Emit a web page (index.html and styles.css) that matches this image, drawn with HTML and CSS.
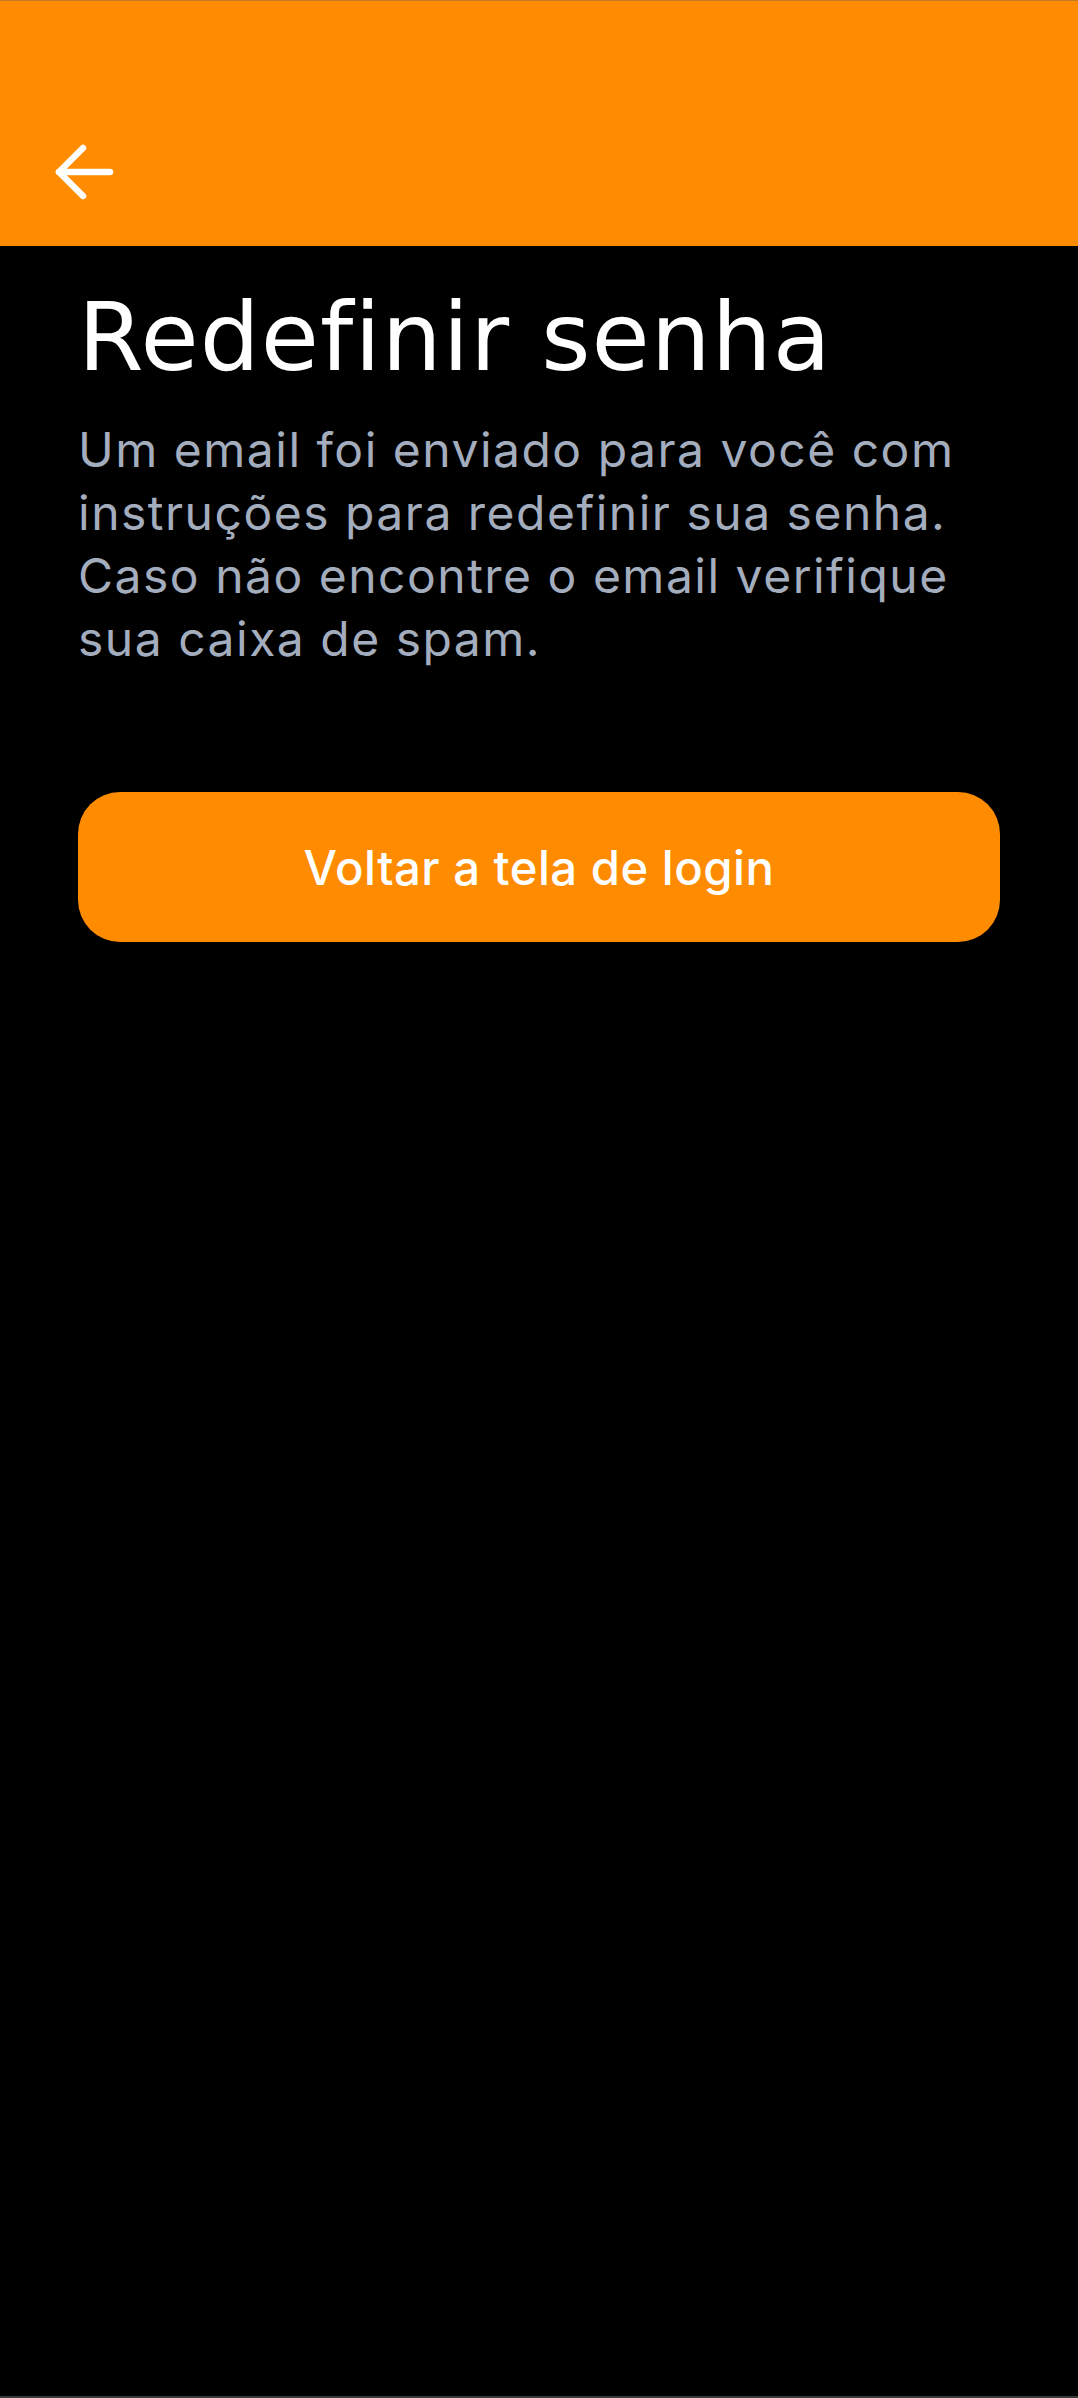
FILE: index.html
```html
<!DOCTYPE html>
<html lang="pt-BR">
<head>
<meta charset="utf-8">
<title>Redefinir senha</title>
<link rel="stylesheet" href="styles.css">
</head>
<body>
<div class="screen">
  <header class="topbar">
    <button class="back" aria-label="Voltar">
      <svg width="80" height="64" viewBox="0 0 80 64" fill="none" stroke="#ffffff" stroke-width="6.5" stroke-linecap="round" stroke-linejoin="round">
        <path d="M19 32 H70"/>
        <path d="M43 8 L19 32 L43 56"/>
      </svg>
    </button>
  </header>
  <main class="content">
    <h1 class="title">Redefinir senha</h1>
    <p class="desc">Um email foi enviado para você com instruções para redefinir sua senha. Caso não encontre o email verifique sua caixa de spam.</p>
    <button class="primary">Voltar a tela de login</button>
  </main>
</div>
</body>
</html>
```
FILE: styles.css
```css
html, body {
  margin: 0;
  padding: 0;
  background: #000000;
}
.screen {
  width: 1078px;
  height: 2398px;
  background: #000000;
  display: flex;
  flex-direction: column;
  box-sizing: border-box;
  border-bottom: 2px solid #3a3a3a;
}
.topbar {
  height: 246px;
  box-sizing: border-box;
  background: #ff8b00;
  border-top: 1px solid #c4782a;
  padding: 139px 0 0 40px;
  flex: none;
}
.back {
  display: block;
  padding: 0;
  margin: 0;
  border: 0;
  background: transparent;
  width: 80px;
  height: 64px;
}
.back svg {
  display: block;
}
.content {
  padding: 0 78px;
  display: flex;
  flex-direction: column;
}
.title {
  margin: 36px 0 0 0;
  font-family: "DejaVu Sans", sans-serif;
  font-weight: 400;
  font-size: 94.5px;
  line-height: 110px;
  color: #ffffff;
  letter-spacing: 1.1px;
}
.desc {
  margin: 26px 0 0 0;
  padding-right: 30px;
  font-family: "Inter", sans-serif;
  font-size: 48px;
  line-height: 63px;
  color: #a3adbe;
  font-weight: 400;
  letter-spacing: 1.5px;
}
.primary {
  margin-top: 122px;
  height: 150px;
  width: 100%;
  border: 0;
  border-radius: 42px;
  background: #ff8b00;
  color: #ffffff;
  font-family: "Inter", sans-serif;
  font-weight: 500;
  font-size: 47.25px;
  letter-spacing: 0.5px;
  padding: 0;
}
```
